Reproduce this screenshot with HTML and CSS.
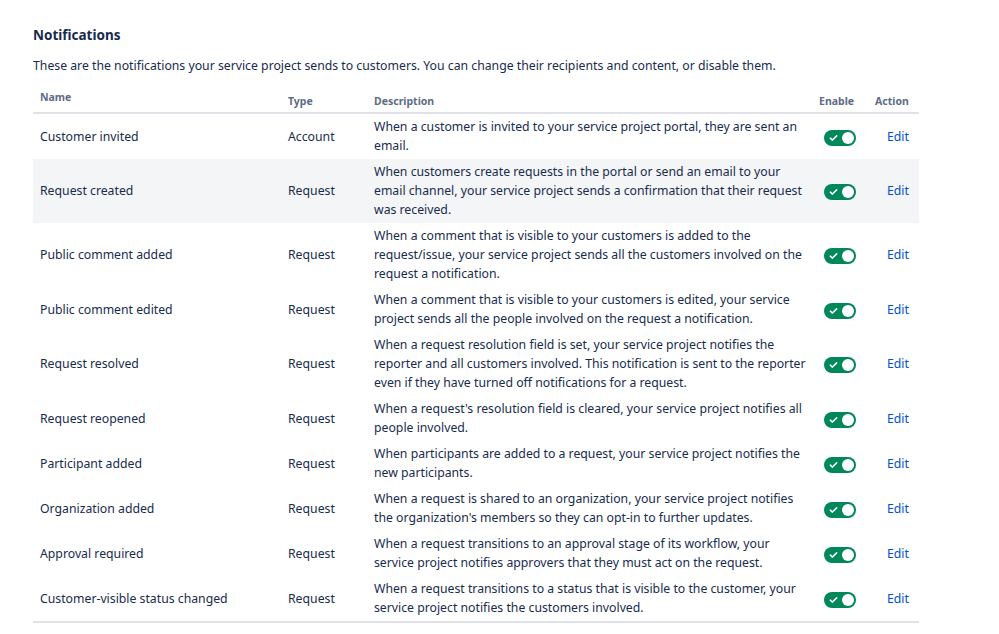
FILE: index.html
```html
<!DOCTYPE html>
<html lang="en">
<head>
<meta charset="utf-8">
<title>Notifications</title>
<link rel="stylesheet" href="styles.css">
</head>
<body>
<main class="page">
  <h2 class="title">Notifications</h2>
  <p class="intro">These are the notifications your service project sends to customers. You can change their recipients and content, or disable them.</p>
  <table class="notif">
    <colgroup>
      <col class="c-name"><col class="c-type"><col class="c-desc"><col class="c-enable"><col class="c-action">
    </colgroup>
    <thead>
      <tr>
        <th class="h-name">Name</th>
        <th>Type</th>
        <th>Description</th>
        <th>Enable</th>
        <th>Action</th>
      </tr>
    </thead>
    <tbody>
      <tr>
        <td>Customer invited</td><td>Account</td>
        <td class="desc">When a customer is invited to your service project portal, they are sent an email.</td>
        <td class="en"><span class="toggle"><svg class="chk" viewBox="0 0 10 8" width="9" height="8"><path d="M1.5 4.2 L3.8 6.3 L8.5 1.6" fill="none" stroke="#fff" stroke-width="1.7" stroke-linecap="round" stroke-linejoin="round"/></svg><span class="knob"></span></span></td>
        <td class="act"><a class="edit" href="#">Edit</a></td>
      </tr>
      <tr class="hl">
        <td>Request created</td><td>Request</td>
        <td class="desc">When customers create requests in the portal or send an email to your email channel, your service project sends a confirmation that their request was received.</td>
        <td class="en"><span class="toggle"><svg class="chk" viewBox="0 0 10 8" width="9" height="8"><path d="M1.5 4.2 L3.8 6.3 L8.5 1.6" fill="none" stroke="#fff" stroke-width="1.7" stroke-linecap="round" stroke-linejoin="round"/></svg><span class="knob"></span></span></td>
        <td class="act"><a class="edit" href="#">Edit</a></td>
      </tr>
      <tr>
        <td>Public comment added</td><td>Request</td>
        <td class="desc">When a comment that is visible to your customers is added to the request/issue, your service project sends all the customers involved on the request a notification.</td>
        <td class="en"><span class="toggle"><svg class="chk" viewBox="0 0 10 8" width="9" height="8"><path d="M1.5 4.2 L3.8 6.3 L8.5 1.6" fill="none" stroke="#fff" stroke-width="1.7" stroke-linecap="round" stroke-linejoin="round"/></svg><span class="knob"></span></span></td>
        <td class="act"><a class="edit" href="#">Edit</a></td>
      </tr>
      <tr>
        <td>Public comment edited</td><td>Request</td>
        <td class="desc">When a comment that is visible to your customers is edited, your service project sends all the people involved on the request a notification.</td>
        <td class="en"><span class="toggle"><svg class="chk" viewBox="0 0 10 8" width="9" height="8"><path d="M1.5 4.2 L3.8 6.3 L8.5 1.6" fill="none" stroke="#fff" stroke-width="1.7" stroke-linecap="round" stroke-linejoin="round"/></svg><span class="knob"></span></span></td>
        <td class="act"><a class="edit" href="#">Edit</a></td>
      </tr>
      <tr>
        <td>Request resolved</td><td>Request</td>
        <td class="desc">When a request resolution field is set, your service project notifies the reporter and all customers involved. This notification is sent to the reporter even if they have turned off notifications for a request.</td>
        <td class="en"><span class="toggle"><svg class="chk" viewBox="0 0 10 8" width="9" height="8"><path d="M1.5 4.2 L3.8 6.3 L8.5 1.6" fill="none" stroke="#fff" stroke-width="1.7" stroke-linecap="round" stroke-linejoin="round"/></svg><span class="knob"></span></span></td>
        <td class="act"><a class="edit" href="#">Edit</a></td>
      </tr>
      <tr>
        <td>Request reopened</td><td>Request</td>
        <td class="desc">When a request's resolution field is cleared, your service project notifies all people involved.</td>
        <td class="en"><span class="toggle"><svg class="chk" viewBox="0 0 10 8" width="9" height="8"><path d="M1.5 4.2 L3.8 6.3 L8.5 1.6" fill="none" stroke="#fff" stroke-width="1.7" stroke-linecap="round" stroke-linejoin="round"/></svg><span class="knob"></span></span></td>
        <td class="act"><a class="edit" href="#">Edit</a></td>
      </tr>
      <tr>
        <td>Participant added</td><td>Request</td>
        <td class="desc">When participants are added to a request, your service project notifies the new participants.</td>
        <td class="en"><span class="toggle"><svg class="chk" viewBox="0 0 10 8" width="9" height="8"><path d="M1.5 4.2 L3.8 6.3 L8.5 1.6" fill="none" stroke="#fff" stroke-width="1.7" stroke-linecap="round" stroke-linejoin="round"/></svg><span class="knob"></span></span></td>
        <td class="act"><a class="edit" href="#">Edit</a></td>
      </tr>
      <tr>
        <td>Organization added</td><td>Request</td>
        <td class="desc">When a request is shared to an organization, your service project notifies the organization's members so they can opt-in to further updates.</td>
        <td class="en"><span class="toggle"><svg class="chk" viewBox="0 0 10 8" width="9" height="8"><path d="M1.5 4.2 L3.8 6.3 L8.5 1.6" fill="none" stroke="#fff" stroke-width="1.7" stroke-linecap="round" stroke-linejoin="round"/></svg><span class="knob"></span></span></td>
        <td class="act"><a class="edit" href="#">Edit</a></td>
      </tr>
      <tr>
        <td>Approval required</td><td>Request</td>
        <td class="desc">When a request transitions to an approval stage of its workflow, your service project notifies approvers that they must act on the request.</td>
        <td class="en"><span class="toggle"><svg class="chk" viewBox="0 0 10 8" width="9" height="8"><path d="M1.5 4.2 L3.8 6.3 L8.5 1.6" fill="none" stroke="#fff" stroke-width="1.7" stroke-linecap="round" stroke-linejoin="round"/></svg><span class="knob"></span></span></td>
        <td class="act"><a class="edit" href="#">Edit</a></td>
      </tr>
      <tr>
        <td>Customer-visible status changed</td><td>Request</td>
        <td class="desc">When a request transitions to a status that is visible to the customer, your service project notifies the customers involved.</td>
        <td class="en"><span class="toggle"><svg class="chk" viewBox="0 0 10 8" width="9" height="8"><path d="M1.5 4.2 L3.8 6.3 L8.5 1.6" fill="none" stroke="#fff" stroke-width="1.7" stroke-linecap="round" stroke-linejoin="round"/></svg><span class="knob"></span></span></td>
        <td class="act"><a class="edit" href="#">Edit</a></td>
      </tr>
    </tbody>
  </table>
</main>
</body>
</html>
```

FILE: styles.css
```css
html, body {
  margin: 0;
  padding: 0;
  background: #fff;
}
body {
  font-family: "Noto Sans", "Open Sans", sans-serif;
  font-size: 12.25px;
  color: #172b4d;
}
.page {
  padding: 25px 0 0 33px;
  width: 886px;
}
.title {
  margin: 0;
  font-size: 13.5px;
  font-weight: 700;
  line-height: 20px;
  color: #172b4d;
}
.intro {
  margin: 11px 0 0;
  line-height: 19px;
}
.notif {
  margin-top: 13px;
  width: 886px;
  border-collapse: collapse;
  table-layout: fixed;
}
.c-name { width: 248px; }
.c-type { width: 86px; }
.c-desc { width: 445px; }
.c-enable { width: 56px; }
.c-action { width: 51px; }
.notif th {
  text-align: left;
  font-size: 10.5px;
  font-weight: 700;
  color: #5e6c84;
  padding: 6px 7px 3px;
  line-height: 15px;
  border-bottom: 2px solid #dfe1e6;
  vertical-align: bottom;
}
.notif th.h-name {
  vertical-align: top;
  padding-top: 2px;
}
.notif td {
  padding: 3px 7px 4px;
  line-height: 19px;
  vertical-align: middle;
}
.notif td.desc {
  padding-right: 4px;
}
.notif tbody tr:last-child td {
  border-bottom: 2px solid #dfe1e6;
}
.notif tr.hl td {
  background: #f4f5f7;
}
.notif td.en {
  text-align: center;
  padding: 0;
}
.toggle {
  display: inline-flex;
  align-items: center;
  justify-content: space-between;
  width: 32px;
  height: 16px;
  border-radius: 8px;
  background: #00875a;
  box-sizing: border-box;
  padding: 0 2px 0 5px;
  vertical-align: middle;
}
.chk { display: block; }
.knob {
  width: 12px;
  height: 12px;
  border-radius: 50%;
  background: #fff;
}
.notif td.act {
  padding-left: 19px;
}
.edit {
  color: #0052cc;
  text-decoration: none;
}
```
